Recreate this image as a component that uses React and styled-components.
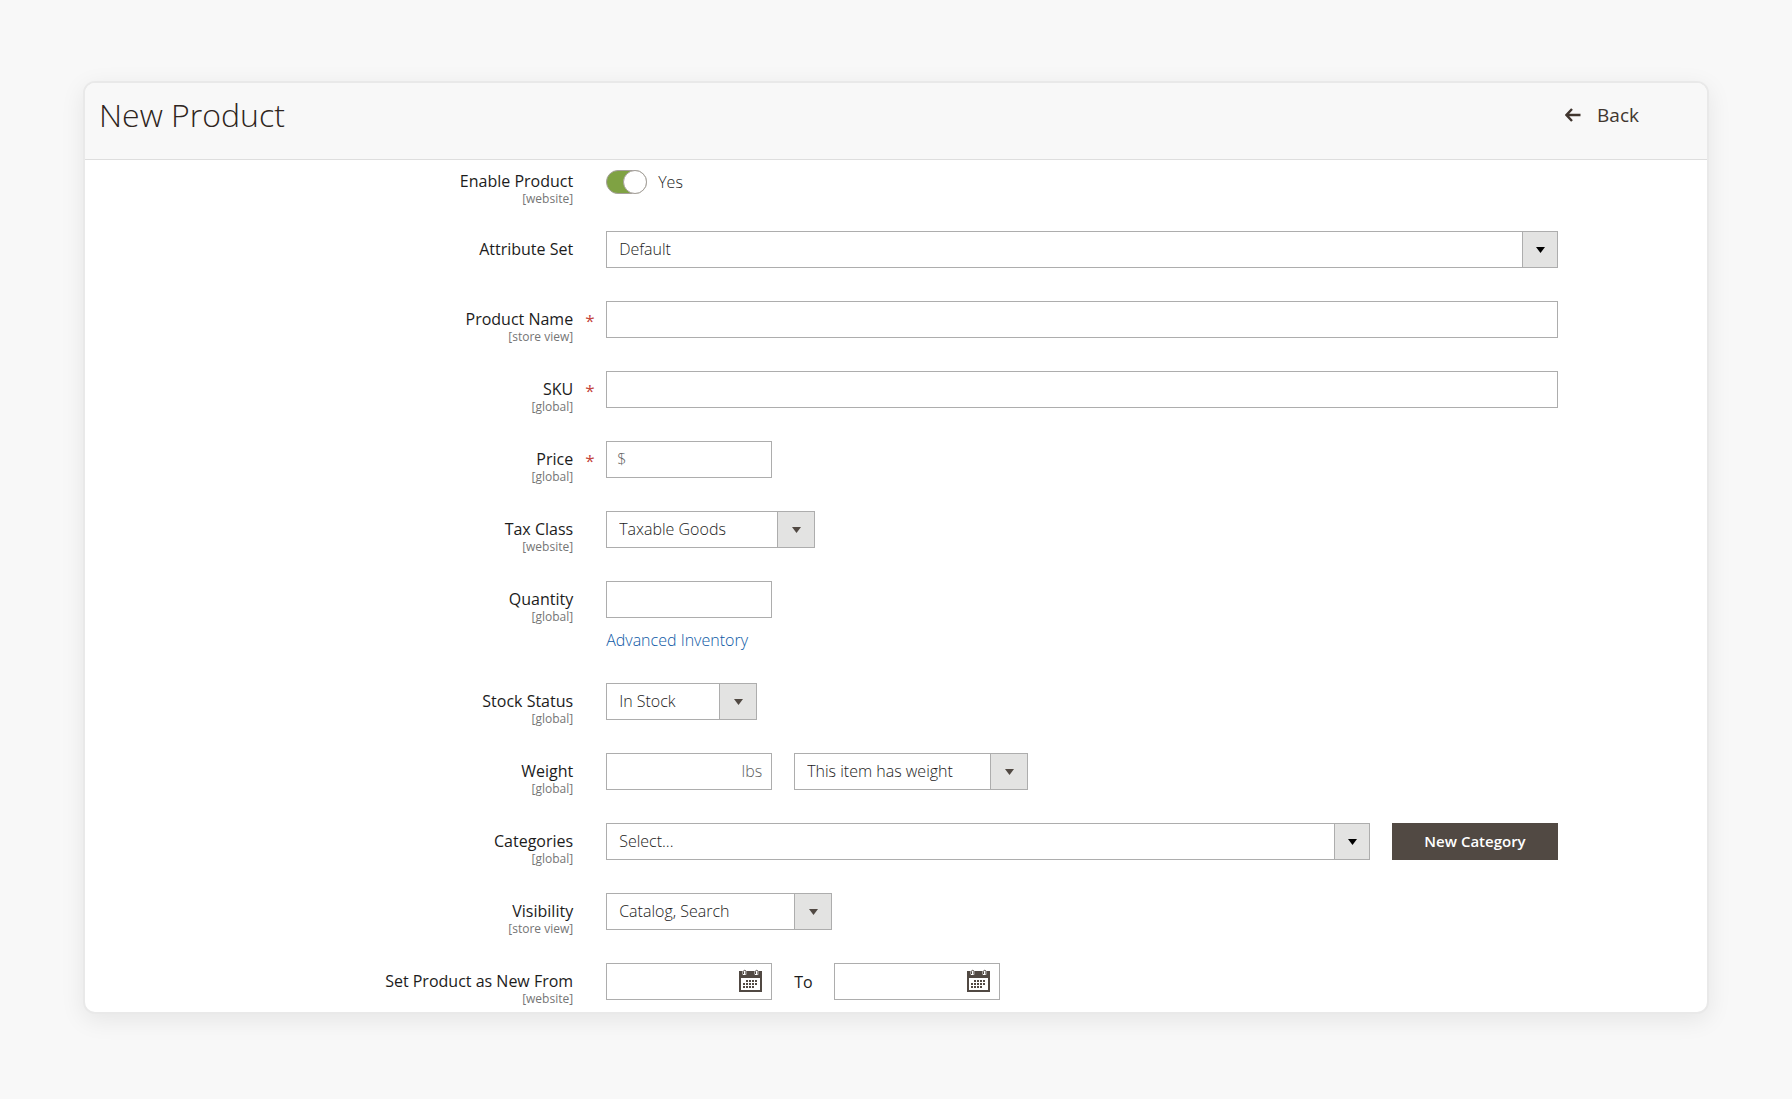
import React, { useState } from "react";
import styled, { createGlobalStyle } from "styled-components";

const GlobalStyle = createGlobalStyle`
  *, *::before, *::after {
    box-sizing: border-box;
  }

  body {
    margin: 0;
    background: #f8f8f8;
    color: #1c1c1c;
    font-family: "Open Sans", "Noto Sans", sans-serif;
    font-size: 16px;
    font-weight: 300;
    line-height: 20px;
  }

  button, input, select {
    margin: 0;
    font: inherit;
    color: inherit;
  }
`;

const Page = styled.main`
  padding: 81px 83px;
`;

const Card = styled.section`
  overflow: hidden;
  border: 2px solid #e9e9e9;
  border-radius: 12px;
  background: #fff;
  box-shadow: 0 6px 24px rgba(0, 0, 0, 0.08);
`;

const Header = styled.header`
  display: flex;
  align-items: flex-start;
  justify-content: space-between;
  height: 77px;
  padding: 12px 68px 0 14px;
  border-bottom: 1px solid #dedede;
  background: #f8f8f8;
`;

const Title = styled.h1`
  margin: 0;
  color: #2e2520;
  font-size: 32px;
  font-weight: 300;
  line-height: 40px;
`;

const BackButton = styled.button`
  display: flex;
  align-items: center;
  gap: 16px;
  height: 40px;
  padding: 0;
  border: 0;
  background: none;
  color: #41362f;
  font-size: 19px;
  font-weight: 500;
  cursor: pointer;
`;

const Form = styled.form`
  padding: 3px 149px 0 0;
`;

const Row = styled.div`
  display: grid;
  grid-template-columns: minmax(0, 339fr) 33px minmax(0, 661fr);
  align-items: start;
  min-height: ${({ $height }) => $height || 70}px;
`;

const RowLabel = styled.label`
  display: flex;
  flex-direction: column;
  align-items: flex-end;
  padding-top: 8px;
  font-weight: 500;
`;

const Scope = styled.span`
  color: #757575;
  font-size: 12px;
  font-weight: 400;
  line-height: 16px;
`;

const Required = styled.span`
  padding: 10px 0 0 12px;
  color: #c4453c;
  font-size: 17px;
  font-weight: 400;
`;

const Controls = styled.div`
  display: flex;
  flex-wrap: wrap;
  align-items: center;
  gap: 8px 22px;
  min-height: 37px;
`;

const InputBox = styled.div`
  display: flex;
  align-items: center;
  width: ${({ $wide }) => ($wide ? "100%" : "166px")};
  height: 37px;
  padding: 0 9px 2px 10px;
  border: 1px solid #adadad;
  background: #fff;
`;

const TextInput = styled.input`
  flex: 1;
  min-width: 0;
  height: 100%;
  padding: 0;
  border: 0;
  outline: 0;
  background: none;
`;

const Unit = styled.span`
  color: #5e5e5e;
`;

const SelectBox = styled.div`
  display: grid;
  grid-template-columns: minmax(0, 1fr) ${({ $dark }) => ($dark ? 35 : 37)}px;
  flex: ${({ $width }) => ($width ? `0 0 ${$width}px` : "1")};
  height: 37px;
  border: 1px solid #adadad;
  background: #fff;
`;

const NativeSelect = styled.select`
  grid-area: 1 / 1 / 2 / 3;
  width: 100%;
  padding: 0 44px 2px 12px;
  border: 0;
  outline: 0;
  appearance: none;
  background: none;
`;

const ArrowCell = styled.span`
  grid-area: 1 / 2 / 2 / 3;
  display: flex;
  align-items: center;
  justify-content: center;
  border-left: 1px solid #adadad;
  background: #e3e3e2;
  color: ${({ $dark }) => ($dark ? "#000" : "#514943")};
  pointer-events: none;
`;

const Toggle = styled.label`
  display: flex;
  align-items: center;
  gap: 11px;
`;

const Switch = styled.input`
  display: flex;
  width: 41px;
  height: 24px;
  border: 1px solid #a5a09b;
  border-radius: 12px;
  appearance: none;
  background: #fff;
  cursor: pointer;

  &::before {
    content: "";
    width: 24px;
    height: 24px;
    margin: -1px;
    border: 1px solid #a5a09b;
    border-radius: 50%;
    background: #fff;
  }

  &:checked {
    justify-content: flex-end;
    background: #7fa243;
  }
`;

const Link = styled.a`
  flex-basis: 100%;
  padding-top: 4px;
  color: #0b58a5;
  text-decoration: none;
`;

const NewCategoryButton = styled.button`
  width: 166px;
  height: 37px;
  padding: 0 0 2px;
  border: 0;
  background: #514943;
  color: #fff;
  font-size: 15px;
  font-weight: 600;
  cursor: pointer;
`;

const IconButton = styled.button`
  display: flex;
  padding: 0;
  border: 0;
  background: none;
  cursor: pointer;
`;

const ToLabel = styled.label`
  width: 18px;
  font-weight: 500;
`;

const BackArrow = () => (
  <svg width="16" height="14" viewBox="0 0 16 14" aria-hidden="true">
    <path
      d="M7 1 1.5 7 7 13M2 7h13.5"
      fill="none"
      stroke="#41362f"
      strokeWidth="2.4"
    />
  </svg>
);

const CalendarIcon = () => (
  <svg width="24" height="24" viewBox="0 0 24 24" aria-hidden="true">
    <path d="M1 2h23v21H1zM3 9v12h19V9z" fill="#514943" fillRule="evenodd" />
    <path
      d="M5 5.500V2.500a1.500 1.500 0 0 1 3 0V5.500zM17 5.500V2.500a1.500 1.500 0 0 1 3 0V5.500z"
      fill="#fff"
      stroke="#fff"
      strokeWidth="1"
    />
    <path
      d="M5.500 5V2.500a1.200 1.200 0 0 1 2.400 0V5.500M17.500 5V2.500a1.200 1.200 0 0 1 2.400 0V5.500"
      fill="none"
      stroke="#514943"
      strokeWidth="1"
    />
    <path
      d="M8 11h2v2H8zM11 11h2v2h-2zM14 11h2v2h-2zM17 11h2v2h-2zM5 14h2v2H5zM8 14h2v2H8zM11 14h2v2h-2zM14 14h2v2h-2zM17 14h2v2h-2zM5 17h2v2H5zM8 17h2v2H8zM11 17h2v2h-2zM14 17h2v2h-2z"
      fill="#514943"
    />
  </svg>
);

const Field = ({ id, label, scope, required, height, children }) => (
  <Row $height={height}>
    <RowLabel htmlFor={id}>
      {label}
      {scope && <Scope>[{scope}]</Scope>}
    </RowLabel>
    {required ? <Required>*</Required> : <span />}
    <Controls>{children}</Controls>
  </Row>
);

const Select = ({ id, options, width, dark, label }) => (
  <SelectBox $width={width} $dark={dark}>
    <NativeSelect id={id} aria-label={label}>
      {options.map((option) => (
        <option key={option}>{option}</option>
      ))}
    </NativeSelect>
    <ArrowCell $dark={dark}>
      <svg width="9" height="6" viewBox="0 0 9 6" aria-hidden="true">
        <path d="M0 0h9L4.500 6z" fill="currentColor" />
      </svg>
    </ArrowCell>
  </SelectBox>
);

const DateInput = ({ id }) => (
  <InputBox>
    <TextInput id={id} type="text" />
    <IconButton type="button" aria-label="Select Date">
      <CalendarIcon />
    </IconButton>
  </InputBox>
);

const App = () => {
  const [enabled, setEnabled] = useState(true);

  return (
    <Page>
      <GlobalStyle />
      <Card>
        <Header>
          <Title>New Product</Title>
          <BackButton type="button">
            <BackArrow />
            Back
          </BackButton>
        </Header>

        <Form onSubmit={(e) => e.preventDefault()}>
          <Field id="enabled" label="Enable Product" scope="website" height={68}>
            <Toggle>
              <Switch
                id="enabled"
                type="checkbox"
                checked={enabled}
                onChange={() => setEnabled(!enabled)}
              />
              {enabled ? "Yes" : "No"}
            </Toggle>
          </Field>

          <Field id="attribute-set" label="Attribute Set">
            <Select id="attribute-set" options={["Default"]} dark />
          </Field>

          <Field id="name" label="Product Name" scope="store view" required>
            <InputBox $wide>
              <TextInput id="name" type="text" />
            </InputBox>
          </Field>

          <Field id="sku" label="SKU" scope="global" required>
            <InputBox $wide>
              <TextInput id="sku" type="text" />
            </InputBox>
          </Field>

          <Field id="price" label="Price" scope="global" required>
            <InputBox>
              <Unit>$</Unit>
              <TextInput id="price" type="text" />
            </InputBox>
          </Field>

          <Field id="tax-class" label="Tax Class" scope="website">
            <Select
              id="tax-class"
              options={["Taxable Goods", "None"]}
              width={209}
            />
          </Field>

          <Field id="qty" label="Quantity" scope="global" height={102}>
            <InputBox>
              <TextInput id="qty" type="text" />
            </InputBox>
            <Link href="#advanced-inventory">Advanced Inventory</Link>
          </Field>

          <Field id="stock" label="Stock Status" scope="global">
            <Select
              id="stock"
              options={["In Stock", "Out of Stock"]}
              width={151}
            />
          </Field>

          <Field id="weight" label="Weight" scope="global">
            <InputBox>
              <TextInput id="weight" type="text" />
              <Unit>lbs</Unit>
            </InputBox>
            <Select
              id="has-weight"
              label="Product has weight"
              options={["This item has weight", "This item has no weight"]}
              width={234}
            />
          </Field>

          <Field id="categories" label="Categories" scope="global">
            <Select id="categories" options={["Select..."]} dark />
            <NewCategoryButton type="button">New Category</NewCategoryButton>
          </Field>

          <Field id="visibility" label="Visibility" scope="store view">
            <Select
              id="visibility"
              options={["Catalog, Search", "Catalog", "Search"]}
              width={226}
            />
          </Field>

          <Field
            id="new-from"
            label="Set Product as New From"
            scope="website"
            height={49}
          >
            <DateInput id="new-from" />
            <ToLabel htmlFor="new-to">To</ToLabel>
            <DateInput id="new-to" />
          </Field>
        </Form>
      </Card>
    </Page>
  );
};

export default App;
